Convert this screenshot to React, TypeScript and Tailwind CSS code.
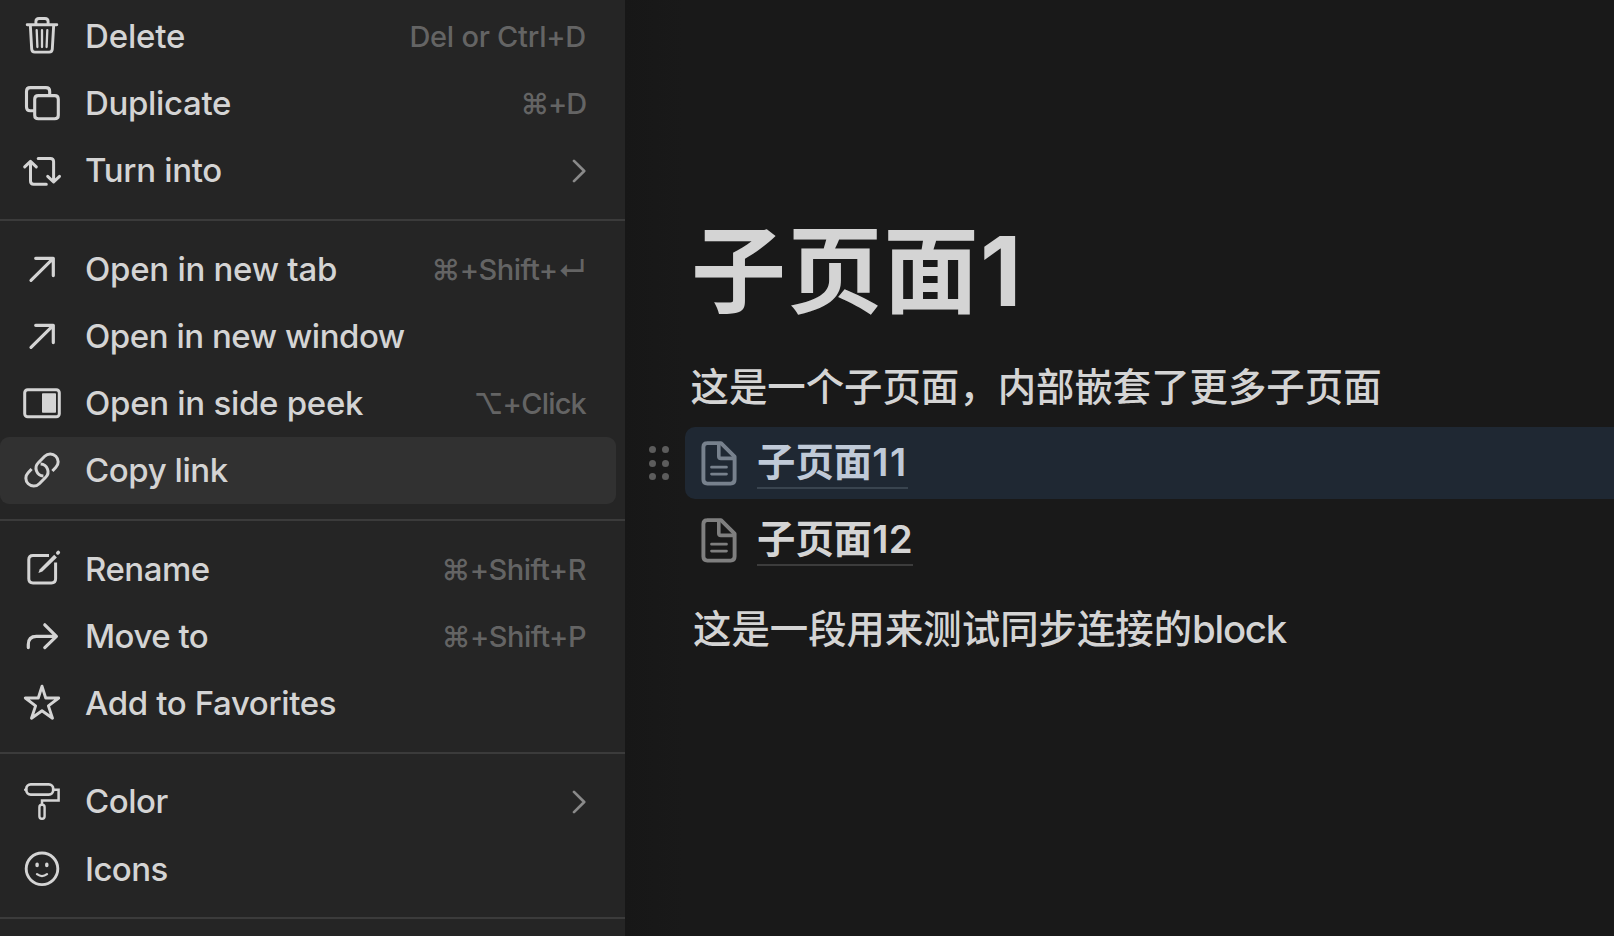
import React from "react";

type IconName = "trash" | "copy" | "turn" | "arrow" | "peek" | "link" | "edit" | "move" | "star" | "roller" | "smile";

const icons: Record<IconName, React.ReactNode> = {
  trash: (
    <>
      <path d="M9.2 21.7H38.8M17.9 21.5V18.6Q17.9 15.5 21 15.5H27Q30.1 15.5 30.1 18.6V21.5M12.3 22L13.7 46.2Q13.9 49.1 16.8 49.1H31.2Q34.1 49.1 34.3 46.2L35.7 22" strokeWidth="2.9" />
      <path d="M18.7 27.2L19.4 44M24 27.2V44M29.3 27.2L28.6 44" strokeWidth="2.3" />
    </>
  ),
  copy: (
    <path d="M31.7 24.5V21.4Q31.7 17.6 27.9 17.6H12.3Q8.5 17.6 8.5 21.4V37Q8.5 40.8 12.3 40.8H16M20.3 25.6H36.7Q40.3 25.6 40.3 29.2V45.2Q40.3 48.8 36.7 48.8H20.3Q16.7 48.8 16.7 45.2V29.2Q16.7 25.6 20.3 25.6Z" strokeWidth="3.1" />
  ),
  turn: (
    <path d="M12.5 25V44Q12.5 47.2 15.7 47.2H28.3M6.7 29.9L12.5 24.3L18.3 29.9M20.2 21.4H32.4Q35.6 21.4 35.6 24.6V44.5M29.7 39.3L35.6 45L41.5 39.3" strokeWidth="3" />
  ),
  arrow: <path d="M13 44.3L35 22.6M17.7 22.3H35.3V39.6" strokeWidth="3.2" />,
  peek: (
    <>
      <rect x="6.7" y="19.8" width="34.6" height="27" rx="3" strokeWidth="3" />
      <rect x="24" y="23.3" width="14" height="19.4" rx="0.8" fill="currentColor" stroke="none" />
    </>
  ),
  link: (
    <path d="M34.4 34L37.9 30.3A7.8 7.8 0 0 0 26.7 19.3L20.3 25.7A7.8 7.8 0 0 0 25.4 39M13.6 32L10.1 35.7A7.8 7.8 0 0 0 21.3 46.7L27.7 40.3A7.8 7.8 0 0 0 22.6 27" strokeWidth="3" strokeLinecap="butt" />
  ),
  edit: (
    <>
      <path d="M31 19.4H15Q10.8 19.4 10.8 23.6V42.8Q10.8 47 15 47H33.4Q37.6 47 37.6 42.8V26.5" strokeWidth="3" strokeLinecap="butt" />
      <path d="M20.4 36.9L21.8 33.2L36.2 18.8L38.9 21.4L24.4 35.6Z" fill="currentColor" stroke="none" />
      <path d="M39.8 16.9L40.3 16.4" strokeWidth="3.6" />
    </>
  ),
  move: <path d="M10.3 44.6V41.5Q10.3 33.4 18.4 33.4H37.5M26.8 21.8L38.4 33.4L26.8 44.6" strokeWidth="3.2" />,
  star: <path d="M24 16.2L27.7 28H40.7L30.4 35.9L34.5 48.2L24 40.7L13.5 48.2L17.6 35.9L7.3 28H20.3Z" strokeWidth="2.9" />,
  roller: (
    <>
      <rect x="8.3" y="16.3" width="26.9" height="10.4" rx="4.4" strokeWidth="2.7" />
      <path d="M7.2 21.7H8M35.5 21.7H40.6V32.4H24V36.5" strokeWidth="2.5" strokeLinejoin="miter" />
      <rect x="21.4" y="36.8" width="5.2" height="13.9" rx="2.4" strokeWidth="2.4" />
    </>
  ),
  smile: (
    <>
      <circle cx="24" cy="32.8" r="15.8" strokeWidth="2.9" />
      <ellipse cx="19.1" cy="28.9" rx="1.8" ry="2.4" fill="currentColor" stroke="none" />
      <ellipse cx="28.8" cy="28.9" rx="1.8" ry="2.4" fill="currentColor" stroke="none" />
      <path d="M19 38.2Q24 42 29 38.2" strokeWidth="2.3" />
    </>
  ),
};

function Icon({ name }: { name: IconName }) {
  return (
    <svg width="48" height="67" viewBox="0 0 48 67" className="shrink-0" fill="none" stroke="currentColor" strokeLinecap="round" strokeLinejoin="round">
      {icons[name]}
    </svg>
  );
}

type Item = {
  icon: IconName;
  label: string;
  labelTracking?: string;
  keys?: string;
  keysTracking?: string;
  more?: boolean;
  active?: boolean;
};

function Row({ icon, label, labelTracking = "tracking-[-0.33px]", keys, keysTracking = "tracking-[-0.4px]", more, active }: Item) {
  return (
    <div className={`mr-[9px] flex h-[67px] items-center rounded-[9px] pl-[18px] ${active ? "bg-[#313131]" : ""}`}>
      <Icon name={icon} />
      <span className={`ml-[19px] whitespace-nowrap text-[33px] leading-[67px] font-[450] ${labelTracking}`}>{label}</span>
      {keys && (
        <span className={`mr-[30px] ml-auto whitespace-nowrap text-[29px] leading-[67px] font-[450] text-[#646464] ${keysTracking}`}>{keys}</span>
      )}
      {more && (
        <svg width="14" height="24" viewBox="0 0 14 24" className="mr-[30px] ml-auto text-[#8a8a8a]" fill="none" stroke="currentColor" strokeWidth="2.7" strokeLinecap="round" strokeLinejoin="round">
          <path d="M2 1.9L12.2 12L2 22.1" />
        </svg>
      )}
    </div>
  );
}

const groups: Item[][] = [
  [
    { icon: "trash", label: "Delete", labelTracking: "tracking-[-0.15px]", keys: "Del or Ctrl+D", keysTracking: "tracking-[-0.25px]" },
    { icon: "copy", label: "Duplicate", keys: "⌘+D", keysTracking: "tracking-[-1.2px]" },
    { icon: "turn", label: "Turn into", more: true },
  ],
  [
    { icon: "arrow", label: "Open in new tab", labelTracking: "tracking-[-0.27px]", keys: "⌘+Shift+↵", keysTracking: "tracking-[-0.5px]" },
    { icon: "arrow", label: "Open in new window", labelTracking: "tracking-[-0.47px]" },
    { icon: "peek", label: "Open in side peek", labelTracking: "tracking-[-0.28px]", keys: "⌥+Click", keysTracking: "tracking-[-0.8px]" },
    { icon: "link", label: "Copy link", labelTracking: "tracking-[-0.42px]", active: true },
  ],
  [
    { icon: "edit", label: "Rename", labelTracking: "tracking-[-0.5px]", keys: "⌘+Shift+R", keysTracking: "tracking-[-0.5px]" },
    { icon: "move", label: "Move to", labelTracking: "tracking-[-0.5px]", keys: "⌘+Shift+P", keysTracking: "tracking-[-0.5px]" },
    { icon: "star", label: "Add to Favorites", labelTracking: "tracking-[-0.38px]" },
  ],
  [
    { icon: "roller", label: "Color", labelTracking: "tracking-[-0.5px]", more: true },
    { icon: "smile", label: "Icons", labelTracking: "tracking-[-0.6px]" },
  ],
];

function Divider() {
  return <div className="h-[2px] bg-[#3b3b3b]" />;
}

function Menu() {
  return (
    <div className="flex w-[625px] shrink-0 flex-col bg-[#252525] pt-[3px]">
      {groups.slice(0, 3).map((group, i) => (
        <React.Fragment key={i}>
          <div className="mb-[15px]">
            {group.map((item) => (
              <Row key={item.label} {...item} />
            ))}
          </div>
          <Divider />
          <div className={i === 2 ? "h-[14px]" : "h-[15px]"} />
        </React.Fragment>
      ))}
      <div className="mb-[14px] flex flex-col gap-px">
        {groups[3].map((item) => (
          <Row key={item.label} {...item} />
        ))}
      </div>
      <Divider />
    </div>
  );
}

function DocIcon() {
  return (
    <svg width="36" height="46" viewBox="0 0 36 46" className="mt-[2px] shrink-0 opacity-55" fill="none" stroke="currentColor" strokeLinejoin="round" strokeLinecap="round">
      <path d="M6 2.1H20L33.6 15.7V38.6Q33.6 42.6 29.6 42.6H6.4Q2.4 42.6 2.4 38.6V6.1Q2.4 2.1 6.4 2.1Z" strokeWidth="3.9" />
      <path d="M17.8 3V15.3Q17.8 17.4 19.9 17.4H33" strokeWidth="3.6" />
      <path d="M10.5 26.2H25.5M10.5 33.1H25.5" strokeWidth="2.7" />
    </svg>
  );
}

function PageLink({ title, digits, tracking, active }: { title: string; digits: string; tracking: string; active?: boolean }) {
  return (
    <div className={`flex h-[72px] items-start rounded-l-[10px] pt-[12px] pl-[16px] ${active ? "bg-[#1f2833] text-[#c0cad8]" : ""}`}>
      <DocIcon />
      <span className={`ml-[20px] border-b-2 pb-[2px] text-[38.4px] leading-[46px] font-semibold whitespace-nowrap ${active ? "border-[#39444f]" : "border-[#3c3c3c]"}`}>
        {title}
        <span className={tracking}>{digits}</span>
      </span>
    </div>
  );
}

export default function App() {
  return (
    <div className="flex h-[936px] w-[1614px] overflow-hidden bg-[#191919] font-['Inter','Noto_Sans_CJK_SC',sans-serif] text-[#d4d4d4]">
      <Menu />
      <div className="w-[60px] shrink-0 bg-linear-to-r from-[#171717] to-[#191919] pt-[446px] pl-[23.5px]">
        <div className="grid w-[20.5px] grid-cols-2 gap-x-[6.5px] gap-y-[6.5px]">
          {[0, 1, 2, 3, 4, 5].map((n) => (
            <div key={n} className="size-[7px] rounded-full bg-[#5c5c5c]" />
          ))}
        </div>
      </div>
      <div className="flex-1 pt-[201px]">
        <h1 className="h-[139px] pl-[6px] text-[96px] leading-[140px] font-bold whitespace-nowrap">
          <span className="text-[95px] tracking-[1.3px]">子页面</span>1
        </h1>
        <p className="mt-[18px] pl-[5.5px] text-[38.4px] leading-[58px] font-medium whitespace-nowrap">这是一个子页面，内部嵌套了更多子页面</p>
        <div className="mt-[11px] flex flex-col gap-[5px]">
          <PageLink title="子页面" digits="11" tracking="tracking-[1.7px]" active />
          <PageLink title="子页面" digits="12" tracking="tracking-[0.3px]" />
        </div>
        <p className="mt-[24px] pl-[8px] text-[38.4px] leading-[58px] font-medium whitespace-nowrap">
          这是一段用来测试同步连接的<span className="font-[450] tracking-[-1.3px]">block</span>
        </p>
      </div>
    </div>
  );
}
